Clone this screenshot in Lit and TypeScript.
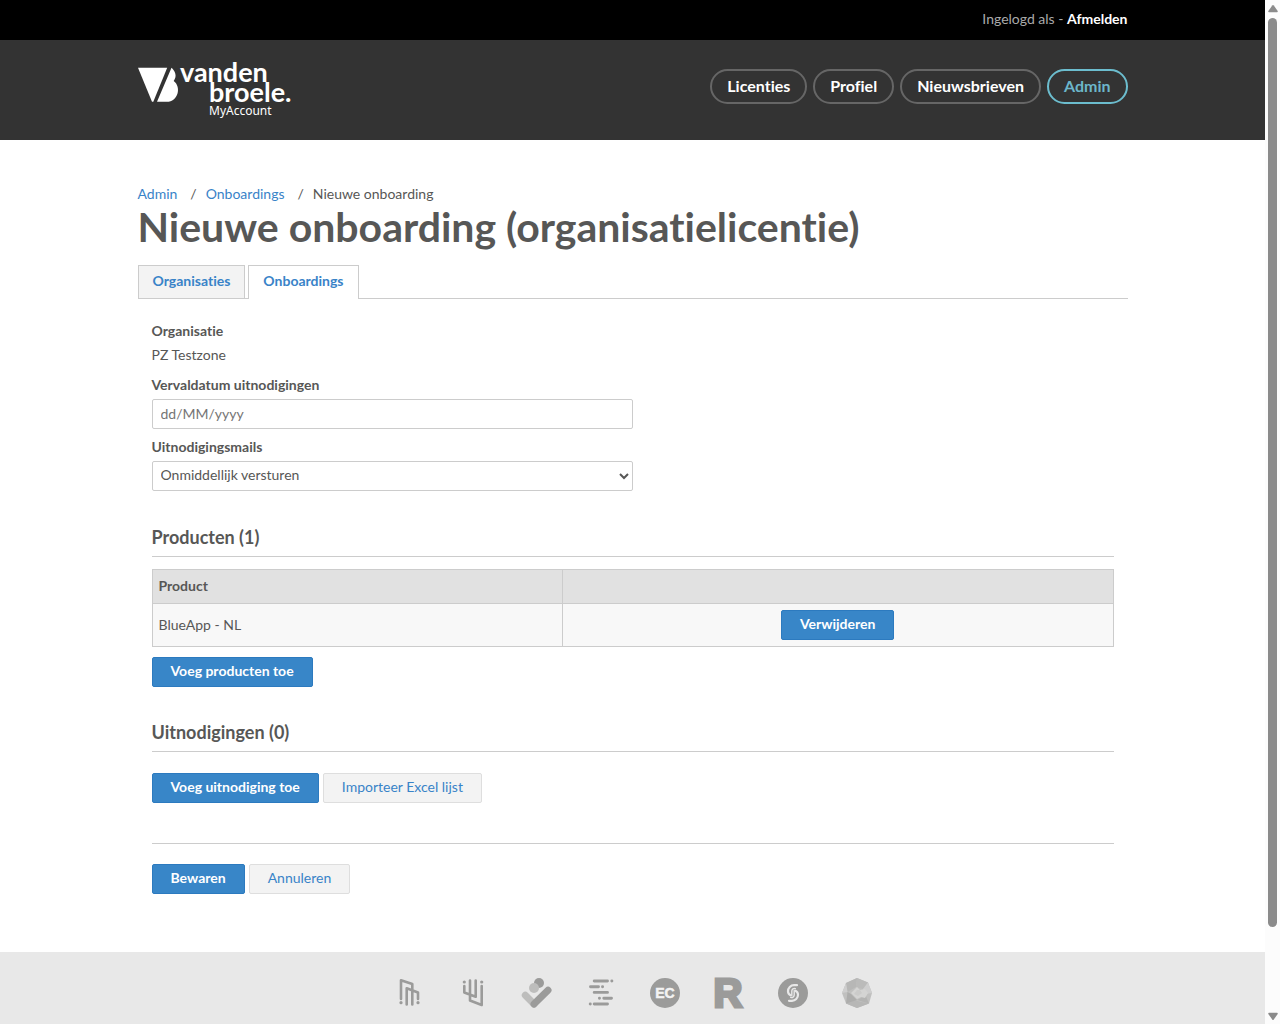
import { LitElement, html, svg, css } from "lit";
import { customElement, property } from "lit/decorators.js";
import { classMap } from "lit/directives/class-map.js";

const brandIcons = [
  {
    name: "Brand 1",
    art: svg`<g class="line"><path d="M8 22V3.3L19.3 7v20.5M13.7 27.5V11.3L25 15.5V22"/></g><circle class="dark" cx="8" cy="25.7" r="1.6"/><circle class="dark" cx="25" cy="25.7" r="1.6"/>`,
  },
  {
    name: "Brand 2",
    art: svg`<g class="line"><path d="M7.3 9v6.5L18.7 19.7V3.5M13 3.5v20L24.7 28V9"/></g><circle class="dark" cx="7.3" cy="5" r="1.6"/><circle class="dark" cx="24.7" cy="5" r="1.6"/>`,
  },
  {
    name: "Brand 3",
    art: svg`<circle class="dark" cx="18" cy="6" r="5"/><circle class="light" cx="13" cy="11" r="5"/><path class="arm-light" d="M4.3 18.3 13 27"/><path class="arm-dark" d="M13 27 27 13.3"/>`,
  },
  {
    name: "Brand 4",
    art: svg`<g class="dash"><path d="M9.2 4h13.3M26.8 4h.1M5.5 9.7h8M17.5 9.7h.1M9.2 15.4h13.3M14.4 21.2h.1M18.8 21.2h7.7M5.2 27h.1M9.2 27h13.3"/></g>`,
  },
  {
    name: "Brand 5",
    art: svg`<circle class="dark" cx="16" cy="16" r="15"/><text class="ec" x="16" y="20.5">EC</text>`,
  },
  {
    name: "Brand 6",
    art: svg`<text class="r" x="15" y="30">R</text>`,
  },
  {
    name: "Brand 7",
    art: svg`<circle class="dark" cx="16" cy="16" r="15"/><g class="knot"><path d="M20 8.200h-3a6 6 0 0 0-6 6c0 2 1 3.200 2.500 4M12 23.800h3a6 6 0 0 0 6-6c0-2-1-3.200-2.500-4"/><path class="inner" d="M14.800 18.500v-4.500a2.500 2.500 0 0 1 3.500-2.300M17.200 13.500v4.500a2.500 2.500 0 0 1-3.500 2.300"/></g>`,
  },
  {
    name: "Brand 8",
    art: svg`<path fill="#c0c0bf" d="M16 1 27 5.500 31 16 28 26.500 16 31 5 26.500 1 16 5 6z"/><path fill="#b7b7b6" d="M16 1 5 6 6.500 15 15 10zM5 26.500 16 31 28 26.500 20 25 10 22z"/><path fill="#adadac" d="M6.500 15 5 26.500 16 23 10 17z"/><path fill="#bbbbba" d="M16 1 27 5.500 22 12 15 10z"/><path fill="#cecece" d="M27 5.500 31 16 24 17 22 12zM1 16 5 6l1.500 9z"/><path fill="#b4b4b3" d="M24 17 28 26.500 16 23l4-2z"/><path fill="#d4d4d3" d="M10 16 16 10l3 3 5-1 3 4-3 5-4-1-4 2z"/><path fill="#cbcbca" d="m16 13 3 0 2 3-4 3-4-2z"/>`,
  },
];

@customElement("brand-logo")
class BrandLogo extends LitElement {
  static styles = css`
    :host { display: block; }
    .logo { display: block; width: 160px; height: 68px; fill: #fff; }
    .word { font: 700 27px Lato, "Liberation Sans", sans-serif; }
    .sub { font: 400 12px "Noto Sans", "Open Sans", sans-serif; }
  `;
  render() {
    return html`<svg class="logo" viewBox="0 0 160 68" role="img" aria-label="vanden broele. MyAccount">
      <path d="M0 15.700h29.200L15.300 49.700 14 49.700z" />
      <path d="M33.500 15.700c3.500 3.500 6 8 2.200 13.200 8 6 4.500 20.800-7 20.800H19z" />
      <text class="word" x="42" y="30">vanden</text>
      <text class="word" x="71" y="50">broele.</text>
      <text class="sub" x="71" y="63">MyAccount</text>
    </svg>`;
  }
}

@customElement("page-scrollbar")
class PageScrollbar extends LitElement {
  static styles = css`
    :host {
      display: flex;
      flex-direction: column;
      align-items: center;
      justify-content: space-between;
      box-sizing: border-box;
      position: sticky;
      top: 0;
      height: 100vh;
      padding: 5px 0 4px;
      background: #fcfcfc;
    }
    .arrow { display: block; width: 10px; height: 8px; fill: #8b8b8b; }
    .track { flex: 1; width: 9px; padding: 5px 0 0; }
    .thumb { height: 91.4%; border-radius: 5px; background: #8b8b8b; }
  `;
  render() {
    return html`
      <svg class="arrow" viewBox="0 0 10 8" aria-hidden="true"><path d="M4.200 .6Q5-.4 5.800 .6L9.700 6Q10 7.300 9 7.300H1Q0 7.300 .3 6z" /></svg>
      <div class="track"><div class="thumb"></div></div>
      <svg class="arrow" viewBox="0 0 10 8" aria-hidden="true"><path d="M4.200 7.400Q5 8.400 5.800 7.400L9.700 2Q10 .7 9 .7H1Q0 .7 .3 2z" /></svg>
    `;
  }
}

@customElement("app-root")
class AppRoot extends LitElement {
  @property({ attribute: false }) nav = ["Licenties", "Profiel", "Nieuwsbrieven", "Admin"];
  @property({ attribute: false }) products = ["BlueApp - NL"];

  static styles = css`
    :host {
      display: grid;
      grid-template-columns: minmax(0, 1fr) 15px;
      align-items: start;
      color: #575756;
      background: #fff;
      font: 400 14px/20px Lato, "Liberation Sans", sans-serif;
      font-variant-ligatures: none;
    }
    .page { display: flex; flex-direction: column; min-height: 100vh; }
    .wrap { box-sizing: border-box; width: 100%; max-width: 990px; margin: 0 auto; }
    a { color: #3983c8; text-decoration: none; }

    .session { background: #000; color: #aaa; }
    .session .wrap { padding: 9px 0 11px; text-align: right; }
    .session a { color: #fff; font-weight: 700; }

    .header { background: #333; }
    .header .wrap { display: flex; justify-content: space-between; align-items: center; min-height: 100px; padding: 0 0 8px; }
    .nav { display: flex; flex-wrap: wrap; gap: 6px; }
    .pill {
      padding: 5px 15px 6px;
      border: 2px solid #666;
      border-radius: 18px;
      color: #fff;
      font-size: 16px;
      font-weight: 700;
    }
    .pill.current { border-color: #6cbdce; color: #6cb6ca; }

    .crumbs { display: flex; margin: 0; padding: 44px 0 0; list-style: none; }
    .crumbs li + li::before { content: "/"; padding: 0 9px 0 13px; }
    h1 { margin: 0; font-size: 41px; line-height: 46px; font-weight: 700; }

    .tabs { display: flex; gap: 3px; margin: 15px 0 0; border-bottom: 1px solid #ccc; }
    .tab { padding: 5px 14px 7px; border: 1px solid #ccc; border-bottom: 0; background: #f3f3f3; font-weight: 700; }
    .tab.current { margin-bottom: -1px; padding-bottom: 8px; background: #fff; }

    .panel { padding: 22px 14px 58px; }
    .fields { display: flex; flex-direction: column; width: 50%; }
    .label { font-weight: 700; }
    .value { margin: 4px 0 10px; }
    .field {
      box-sizing: border-box;
      width: 100%;
      height: 30px;
      margin: 4px 0 8px;
      padding: 0 8px 2px;
      border: 1px solid #ccc;
      border-radius: 2px;
      background: #fff;
      color: #575756;
      font: inherit;
    }
    .field::placeholder { color: #757575; }
    select.field { padding: 0 4px 3px; }

    h2 { margin: 0 0 12px; padding-bottom: 9px; border-bottom: 1px solid #ccc; font-size: 18px; line-height: 20px; font-weight: 700; }
    .products { margin-top: 28px; }
    .invites { margin-top: 35px; }
    .invites .actions { margin-top: 21px; }

    table { width: 100%; margin-bottom: 10px; border-collapse: collapse; table-layout: fixed; background: #f8f8f8; }
    .name-col { width: 42.7%; }
    th, td { padding: 6px; border: 1px solid #ccc; text-align: left; }
    th { padding-bottom: 7px; background: #e1e1e1; font-weight: 700; }
    td.action { text-align: center; }

    .actions { display: flex; flex-wrap: wrap; gap: 4px; }
    .btn {
      height: 30px;
      padding: 0 18px 2px;
      border: 1px solid #dedede;
      border-radius: 2px;
      background: #f3f3f3;
      color: #3983c8;
      font: inherit;
      font-variant-ligatures: none;
      cursor: pointer;
    }
    .btn.primary { border-color: #2c7abf; background: #3886c8; color: #fff; font-weight: 700; }
    td .btn { display: block; margin: 0 auto; }
    .save { margin-top: 40px; padding-top: 20px; border-top: 1px solid #ccc; }

    .footer { flex: 1; padding: 25px 0 15px; background: #e8e8e8; }
    .brands { display: flex; flex-wrap: wrap; justify-content: center; gap: 32px; }
    .brand, .brand svg { display: block; width: 32px; height: 32px; overflow: visible; }
    .dark { fill: #9b9b9a; }
    .light { fill: #bdbdbc; }
    .line { fill: none; stroke: #9b9b9a; stroke-width: 2.600; stroke-linecap: round; stroke-linejoin: round; }
    .dash { fill: none; stroke: #9b9b9a; stroke-width: 2.900; stroke-linecap: round; }
    .arm-light, .arm-dark { fill: none; stroke-width: 7; stroke-linecap: round; }
    .arm-light { stroke: #bdbdbc; }
    .arm-dark { stroke: #9b9b9a; }
    .knot { fill: none; stroke: #e8e8e8; stroke-width: 2.200; stroke-linecap: round; }
    .inner { stroke-width: 1.400; }
    .ec { fill: #f3f3f3; stroke: #f3f3f3; stroke-width: 0.500; font: 700 14px "Liberation Sans", Arial, sans-serif; text-anchor: middle; }
    .r { fill: #9b9b9a; stroke: #9b9b9a; stroke-width: 3; font: 700 40px "Liberation Sans", Arial, sans-serif; text-anchor: middle; }
  `;

  render() {
    return html`
      <div class="page">
        <div class="session"><div class="wrap">Ingelogd als - <a href="#afmelden">Afmelden</a></div></div>
        <header class="header">
          <div class="wrap">
            <a href="#home"><brand-logo></brand-logo></a>
            <nav class="nav">
              ${this.nav.map(
                (item) => html`<a class=${classMap({ pill: true, current: item === "Admin" })} href="#${item.toLowerCase()}">${item}</a>`
              )}
            </nav>
          </div>
        </header>
        <main class="wrap">
          <ol class="crumbs">
            <li><a href="#admin">Admin</a></li>
            <li><a href="#onboardings">Onboardings</a></li>
            <li>Nieuwe onboarding</li>
          </ol>
          <h1>Nieuwe onboarding (organisatielicentie)</h1>
          <nav class="tabs">
            <a class="tab" href="#organisaties">Organisaties</a>
            <a class="tab current" href="#onboardings">Onboardings</a>
          </nav>
          <form class="panel" @submit=${(e: Event) => e.preventDefault()}>
            <div class="fields">
              <span class="label">Organisatie</span>
              <span class="value">PZ Testzone</span>
              <label class="label" for="expiry">Vervaldatum uitnodigingen</label>
              <input class="field" id="expiry" type="text" placeholder="dd/MM/yyyy" />
              <label class="label" for="mails">Uitnodigingsmails</label>
              <select class="field" id="mails"><option>Onmiddellijk versturen</option></select>
            </div>
            <section class="products">
              <h2>Producten (${this.products.length})</h2>
              <table>
                <colgroup><col class="name-col" /><col /></colgroup>
                <thead><tr><th scope="col">Product</th><th></th></tr></thead>
                <tbody>
                  ${this.products.map(
                    (p) => html`<tr><td>${p}</td><td class="action"><button class="btn primary" type="button">Verwijderen</button></td></tr>`
                  )}
                </tbody>
              </table>
              <button class="btn primary" type="button">Voeg producten toe</button>
            </section>
            <section class="invites">
              <h2>Uitnodigingen (0)</h2>
              <div class="actions">
                <button class="btn primary" type="button">Voeg uitnodiging toe</button>
                <button class="btn" type="button">Importeer Excel lijst</button>
              </div>
            </section>
            <div class="actions save">
              <button class="btn primary" type="submit">Bewaren</button>
              <button class="btn" type="button">Annuleren</button>
            </div>
          </form>
        </main>
        <footer class="footer">
          <div class="brands">
            ${brandIcons.map(
              (b) => html`<a class="brand" href="#brand" aria-label=${b.name}><svg viewBox="0 0 32 32" aria-hidden="true">${b.art}</svg></a>`
            )}
          </div>
        </footer>
      </div>
      <page-scrollbar aria-hidden="true"></page-scrollbar>
    `;
  }
}
